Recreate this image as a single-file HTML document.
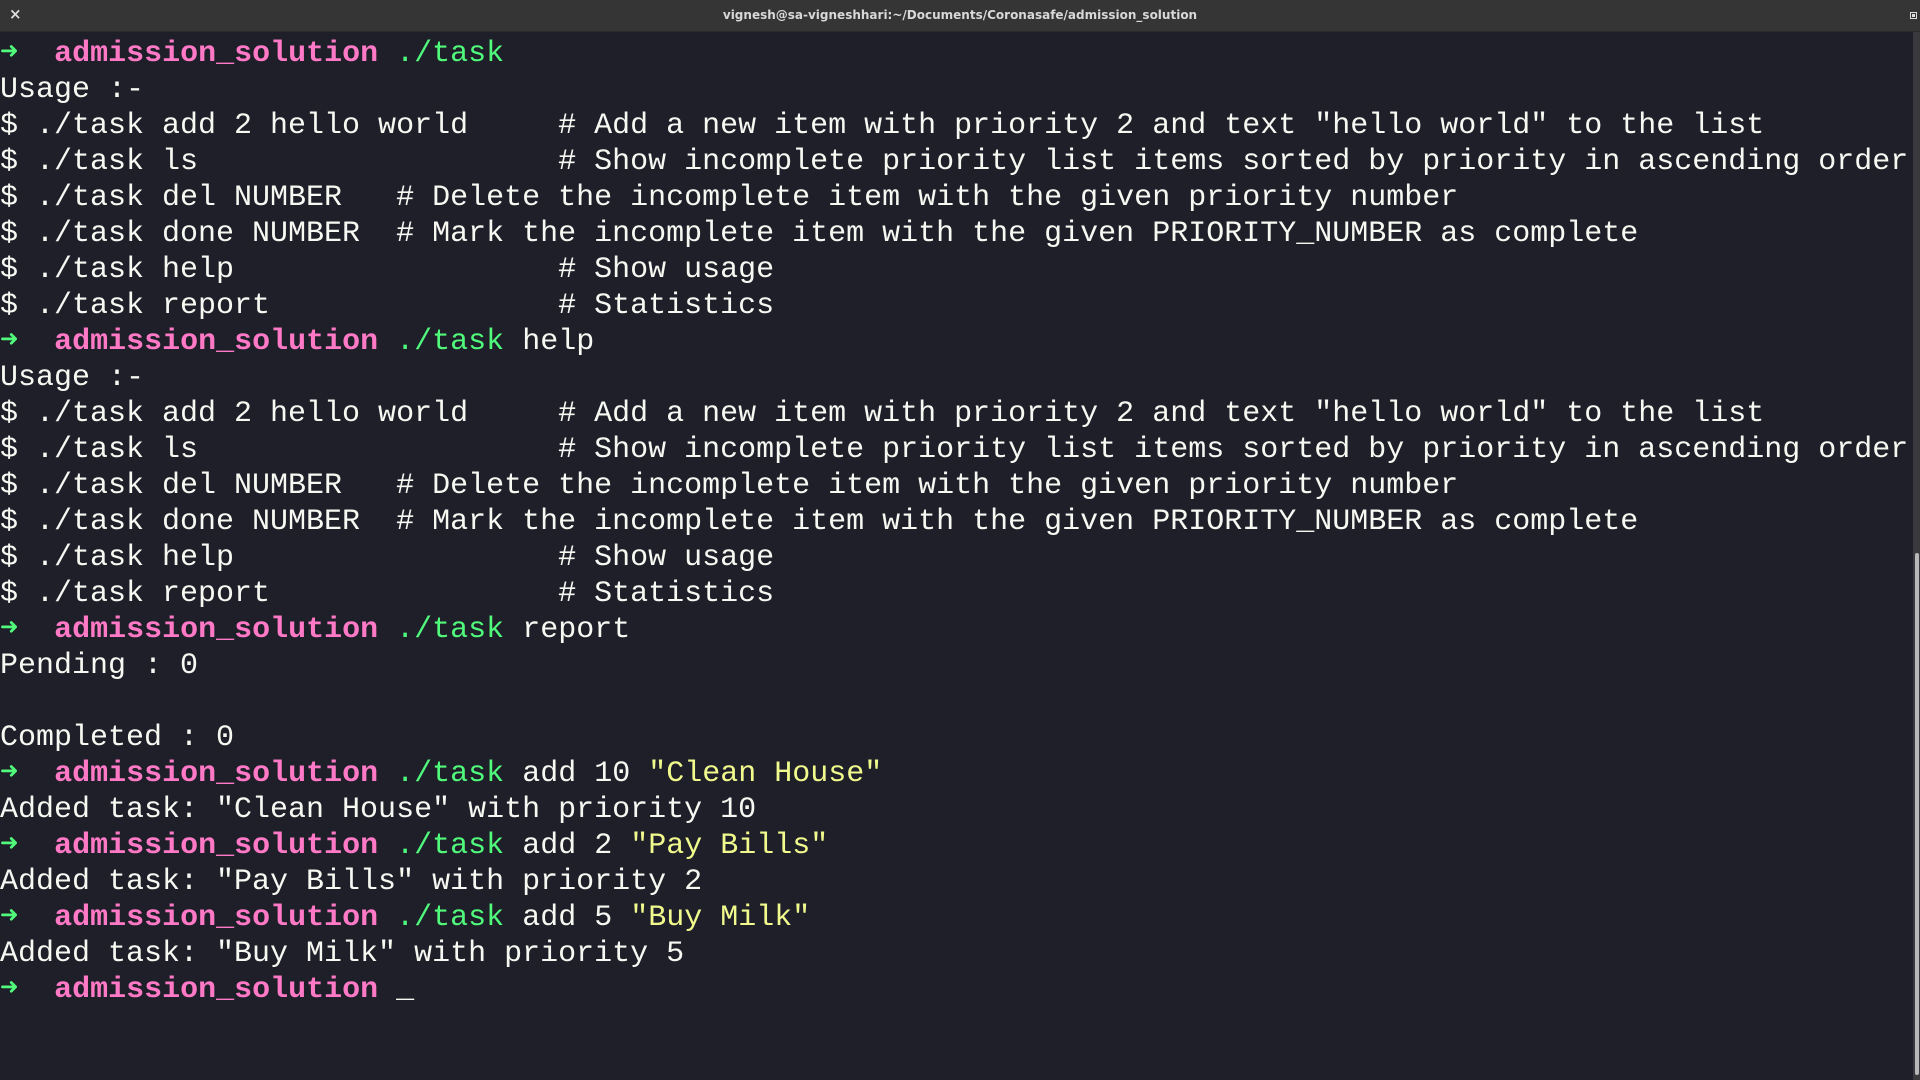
<!DOCTYPE html>
<html><head><meta charset="utf-8"><style>
html,body{margin:0;padding:0;width:1920px;height:1080px;overflow:hidden;background:#1e1f29;}
.tb{position:absolute;left:0;top:0;width:1920px;height:32px;background:#353535;border-bottom:1px solid #2a2a2a;box-sizing:border-box;}
.tt{position:absolute;left:0;right:0;top:8px;text-align:center;font:bold 12px "DejaVu Sans","Liberation Sans",sans-serif;color:#d8d8d8;}
.x{position:absolute;left:9px;top:5px;font:bold 15px "DejaVu Sans",sans-serif;color:#ddd;}
.mx{position:absolute;right:3px;top:12px;width:7px;height:7px;border:1px solid #ddd;box-sizing:border-box;background:#353535;}
.mx:after{content:"";position:absolute;left:1px;top:1px;width:3px;height:3px;background:#ddd;}
.term{position:absolute;left:0;top:36px;font:30px/36px "Liberation Mono",monospace;color:#f8f8f2;white-space:pre;}
.g{color:#50fa7b;font-weight:bold}.p{color:#ff79c6;font-weight:bold}.c{color:#50fa7b}.y{color:#f1fa8c}
.track{position:absolute;left:1913px;top:32px;width:7px;height:1048px;background:#3a3a3e;}
.thumb{position:absolute;left:1915px;top:553px;width:4px;height:522px;background:#b8b8b8;border-radius:2px;}
</style></head><body>
<div class="tb"><span class="x">×</span><div class="tt">vignesh@sa-vigneshhari:~/Documents/Coronasafe/admission_solution</div><div class="mx"></div></div>
<div class="term"><span class="g">➜</span>  <span class="p">admission_solution</span> <span class="c">./task</span>
Usage :-
$ ./task add 2 hello world     # Add a new item with priority 2 and text "hello world" to the list
$ ./task ls                    # Show incomplete priority list items sorted by priority in ascending order
$ ./task del NUMBER   # Delete the incomplete item with the given priority number
$ ./task done NUMBER  # Mark the incomplete item with the given PRIORITY_NUMBER as complete
$ ./task help                  # Show usage
$ ./task report                # Statistics
<span class="g">➜</span>  <span class="p">admission_solution</span> <span class="c">./task</span> help
Usage :-
$ ./task add 2 hello world     # Add a new item with priority 2 and text "hello world" to the list
$ ./task ls                    # Show incomplete priority list items sorted by priority in ascending order
$ ./task del NUMBER   # Delete the incomplete item with the given priority number
$ ./task done NUMBER  # Mark the incomplete item with the given PRIORITY_NUMBER as complete
$ ./task help                  # Show usage
$ ./task report                # Statistics
<span class="g">➜</span>  <span class="p">admission_solution</span> <span class="c">./task</span> report
Pending : 0

Completed : 0
<span class="g">➜</span>  <span class="p">admission_solution</span> <span class="c">./task</span> add 10 <span class="y">"Clean House"</span>
Added task: "Clean House" with priority 10
<span class="g">➜</span>  <span class="p">admission_solution</span> <span class="c">./task</span> add 2 <span class="y">"Pay Bills"</span>
Added task: "Pay Bills" with priority 2
<span class="g">➜</span>  <span class="p">admission_solution</span> <span class="c">./task</span> add 5 <span class="y">"Buy Milk"</span>
Added task: "Buy Milk" with priority 5
<span class="g">➜</span>  <span class="p">admission_solution</span> _</div>
<div class="track"></div><div class="thumb"></div>
</body></html>
